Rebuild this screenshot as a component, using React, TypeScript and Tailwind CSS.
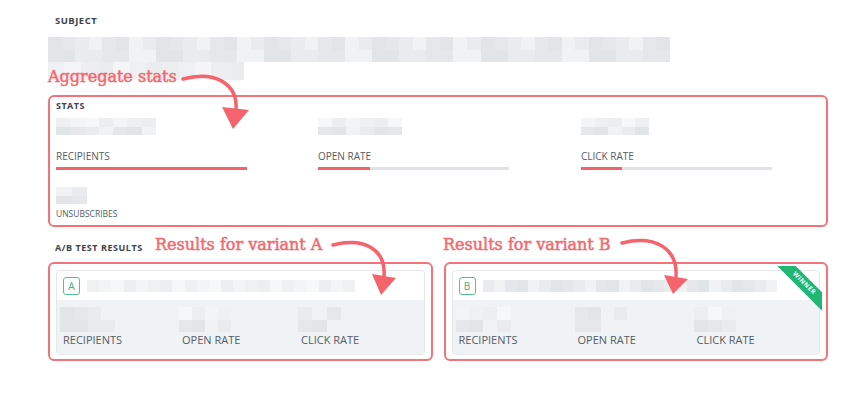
import React from 'react'

const shades = ['#eceef0', '#e5e7ea', '#f3f4f6', '#e9ebee', '#f6f7f8', '#e2e5e8', '#eef0f2', '#f1f2f4']

// pixelated "blurred" placeholder made of little gray cells
const Blur = ({ className, rows = 2, cols = 8, seed = 1 }: { className: string; rows?: number; cols?: number; seed?: number }) => {
  const grid = []
  for (let r = 0; r < rows; r++) {
    const row = []
    for (let c = 0; c < cols; c++) {
      const i = (r * 5 + c * 3 + seed * 7 + ((c * c + r * seed) % 4)) % shades.length
      row.push(<div key={c} className="flex-1" style={{ backgroundColor: shades[i] }} />)
    }
    grid.push(
      <div key={r} className="flex flex-1">
        {row}
      </div>
    )
  }
  return <div className={'flex flex-col overflow-hidden ' + className}>{grid}</div>
}

const Bar = ({ fill }: { fill: string }) => (
  <div className="mt-[4px] h-[3px] w-[191px] bg-[#dfe2e6]">
    <div className={'h-full bg-[#f2646d] ' + fill} />
  </div>
)

const StatLabel = ({ children }: { children: React.ReactNode }) => (
  <div className="text-[10px] leading-[14px] text-[#555c65]">{children}</div>
)

const Variant = ({ letter, seed, winner }: { letter: string; seed: number; winner?: boolean }) => (
  <div className="rounded-[6px] border-2 border-[#f4727a] px-[6px] pt-[6px] pb-[4px]">
    <div className="relative rounded-[4px] border border-[#e4e7eb] bg-white">
      <div className="flex h-[29px] items-center gap-[7px] pl-[6px]">
        <div className="flex h-[18px] w-[17px] items-center justify-center rounded-[3px] border border-[#55c193] text-[10px] leading-none text-[#3fae7e]">
          {letter}
        </div>
        <Blur className={winner ? 'h-[12px] w-[295px]' : 'h-[12px] w-[268px]'} rows={1} cols={winner ? 26 : 22} seed={seed} />
      </div>
      <div className="h-[54px] rounded-b-[4px] bg-[#f0f3f6] pl-[3px] pt-[7px]">
        <div className="grid grid-cols-[119px_119px_1fr]">
          <div>
            <Blur className="h-[25px] w-[55px]" cols={4} seed={seed + 1} />
            <div className="mt-[1px] pl-[3px] text-[11px] leading-[14px] text-[#555c65]">RECIPIENTS</div>
          </div>
          <div>
            <Blur className="h-[25px] w-[52px]" cols={4} seed={seed + 2} />
            <div className="mt-[1px] pl-[3px] text-[11px] leading-[14px] text-[#555c65]">OPEN RATE</div>
          </div>
          <div>
            <Blur className="h-[25px] w-[43px]" cols={3} seed={seed + 3} />
            <div className="mt-[1px] pl-[3px] text-[11px] leading-[14px] text-[#555c65]">CLICK RATE</div>
          </div>
        </div>
      </div>
      {winner && (
        <div className="absolute -top-[5px] -right-[3px] h-[46px] w-[46px] overflow-hidden">
          <div className="absolute left-[-4px] top-[11px] flex h-[13px] w-[64px] rotate-45 items-center justify-center bg-[#22b574] text-[6.5px] font-bold leading-none tracking-[0.06em] text-white">
            WINNER
          </div>
        </div>
      )}
    </div>
  </div>
)

const App = () => {
  return (
    <div className="relative h-[394px] w-[866px] overflow-hidden bg-white font-['Open_Sans',sans-serif]">
      <div className="pl-[48px] pr-[38px] pt-[15px]">
        <div className="pl-[7px] text-[9.5px] font-bold leading-[12px] tracking-[0.05em] text-[#3d434b]">SUBJECT</div>

        <div className="mt-[10px]">
          <Blur className="h-[25px] w-[622px]" cols={46} seed={3} />
          <Blur className="h-[18px] w-[196px] opacity-70" rows={1} cols={12} seed={5} />
        </div>

        <div className="mt-[15px] h-[132px] rounded-[6px] border-2 border-[#f4727a] pl-[6px] pt-[3px]">
          <div className="text-[9px] font-bold leading-[12px] tracking-[0.05em] text-[#3d434b]">STATS</div>
          <div className="mt-[6px] grid grid-cols-[262px_263px_1fr]">
            <div>
              <Blur className="h-[17px] w-[100px]" cols={7} seed={2} />
              <div className="mt-[14px]">
                <StatLabel>RECIPIENTS</StatLabel>
              </div>
              <Bar fill="w-full" />
            </div>
            <div>
              <Blur className="h-[17px] w-[84px]" cols={6} seed={4} />
              <div className="mt-[14px]">
                <StatLabel>OPEN RATE</StatLabel>
              </div>
              <Bar fill="w-[52px]" />
            </div>
            <div>
              <Blur className="h-[17px] w-[68px]" cols={5} seed={6} />
              <div className="mt-[14px]">
                <StatLabel>CLICK RATE</StatLabel>
              </div>
              <Bar fill="w-[41px]" />
            </div>
          </div>
          <Blur className="mt-[17px] h-[17px] w-[31px]" cols={2} seed={1} />
          <div className="mt-[4px] text-[8.5px] leading-[12px] text-[#555c65]">UNSUBSCRIBES</div>
        </div>

        <div className="mt-[15px] pl-[7px] text-[9px] font-bold leading-[12px] tracking-[0.06em] text-[#3d434b]">A/B TEST RESULTS</div>

        <div className="mt-[8px] grid grid-cols-2 gap-[11px]">
          <Variant letter="A" seed={2} />
          <Variant letter="B" seed={5} winner />
        </div>
      </div>

      {/* annotations */}
      <div className="absolute left-[48px] top-[67px] font-['DejaVu_Serif',serif] text-[16px] leading-[20px] text-[#f5676e] [-webkit-text-stroke:0.5px_#f5676e]">Aggregate stats</div>
      <div className="absolute left-[155px] top-[235px] font-['DejaVu_Serif',serif] text-[16px] leading-[20px] text-[#f5676e] [-webkit-text-stroke:0.5px_#f5676e]">Results for variant A</div>
      <div className="absolute left-[443px] top-[235px] font-['DejaVu_Serif',serif] text-[16px] leading-[20px] text-[#f5676e] [-webkit-text-stroke:0.5px_#f5676e]">Results for variant B</div>

      <svg className="pointer-events-none absolute left-0 top-0" width="866" height="394" viewBox="0 0 866 394">
        <g fill="none" stroke="#f5646d" strokeWidth="3.5" strokeLinecap="round">
          <path d="M183 79 C 215 70, 238 84, 236 110" />
          <path d="M333 245 C 365 237, 386 250, 384 276" />
          <path d="M622 243 C 655 235, 678 248, 676 277" />
        </g>
        <g fill="#f5646d">
          <polygon points="222,107 249,110 233,129" />
          <polygon points="372,274 396,278 381,295" />
          <polygon points="664,275 688,279 673,294" />
        </g>
      </svg>
    </div>
  )
}

export default App
